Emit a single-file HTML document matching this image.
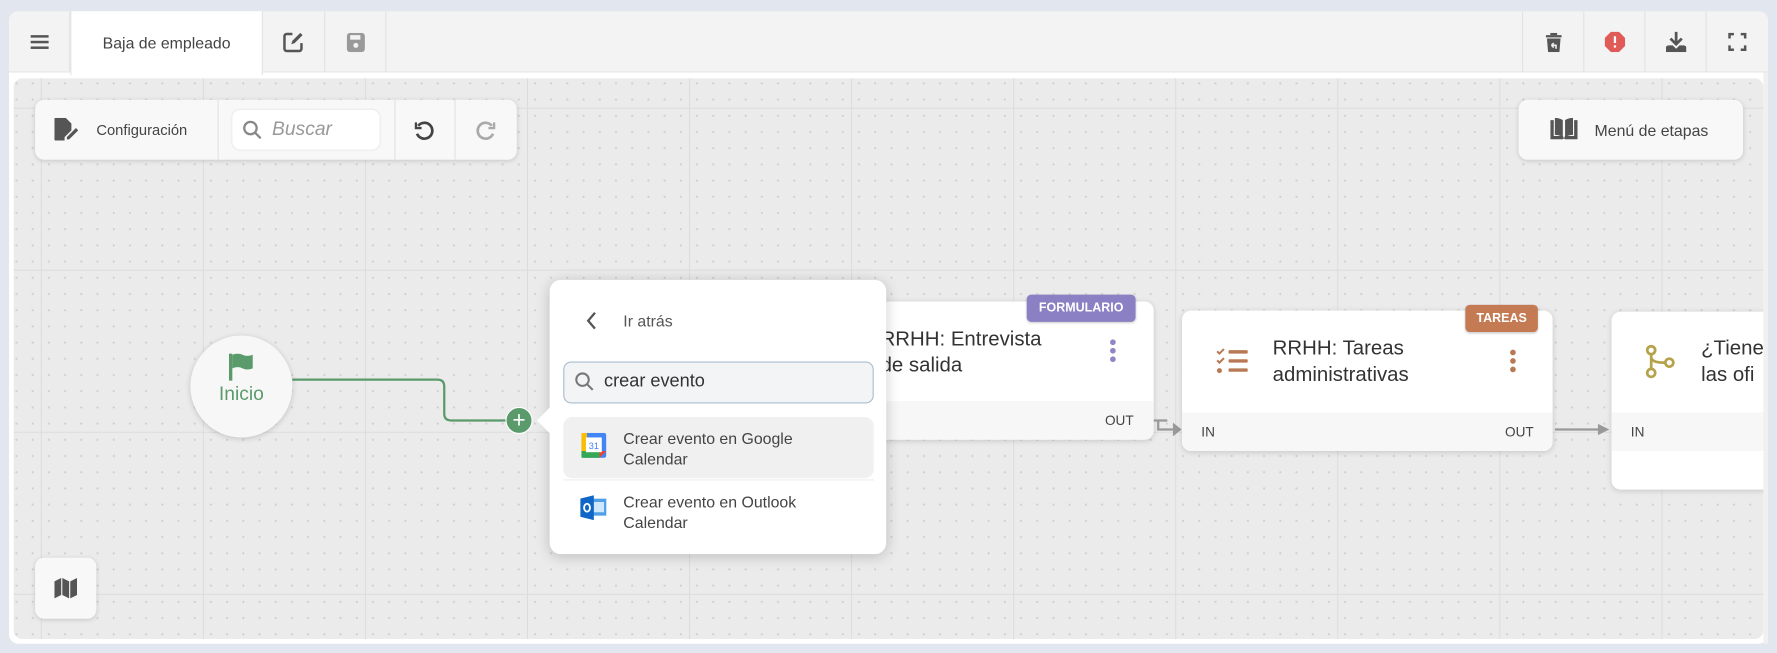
<!DOCTYPE html>
<html><head><meta charset="utf-8"><style>
*{box-sizing:border-box;margin:0;padding:0}
html,body{width:1777px;height:653px;overflow:hidden;background:#e2e6ee;font-family:"Liberation Sans",sans-serif}
#w{position:absolute;left:0;top:0;width:1568px;height:576px;transform:scale(1.13329);transform-origin:0 0}
.abs{position:absolute}
.panel{left:8px;top:10px;width:1552px;height:558px;background:#fff;border-radius:8px}
.hdr{left:8px;top:10px;width:1552px;height:54px;background:#f3f3f3;border-radius:8px 8px 0 0;border-bottom:1px solid #e4e4e4}
.cell{position:absolute;top:10px;height:54px;border-right:1px solid #e2e2e2;display:flex;align-items:center;justify-content:center}
.canvas{left:12px;top:69px;width:1544px;height:495px;border-radius:8px;overflow:hidden;background-color:#ebebeb;
background-image:linear-gradient(#dcdcdc 1px,transparent 1px),linear-gradient(90deg,#dcdcdc 1px,transparent 1px),radial-gradient(circle,#cfcfcf 0.8px,transparent 1.1px);
background-size:143px 143px,143px 143px,14.3px 14.3px;background-position:24px 26px,24px 26px,24px 26px}
.box{background:#f8f8f8;border-radius:8px;box-shadow:0 1px 4px rgba(0,0,0,.15)}
.node{background:#fff;border-radius:8px;box-shadow:0 1px 5px rgba(0,0,0,.15);overflow:visible}
.badge{position:absolute;color:#fff;font-weight:bold;font-size:11px;border-radius:4px;display:flex;align-items:center;justify-content:center;box-shadow:0 1px 2px rgba(0,0,0,.2)}
.t{font-size:18px;color:#333;line-height:23px}
.sm{font-size:13px;color:#444}
</style></head><body><div id="w">
<div class="abs panel"></div>
<div class="abs hdr"></div>
<div class="cell" style="left:8px;width:54px"><svg width="16" height="14"><rect y="1" width="16" height="2.2" fill="#555"/><rect y="6" width="16" height="2.2" fill="#555"/><rect y="11" width="16" height="2.2" fill="#555"/></svg></div>
<div class="cell" style="left:62px;width:170px;background:#fff;height:56px;border-left:1px solid #e2e2e2;font-size:14px;color:#444">Baja de empleado</div>
<div class="cell" style="left:232px;width:55px"><svg width="20" height="20" viewBox="0 0 20 20"><path d="M9 3H4a2 2 0 0 0-2 2v11a2 2 0 0 0 2 2h11a2 2 0 0 0 2-2v-5" fill="none" stroke="#555" stroke-width="2.2"/><path d="M8 12l1-3 7-7 2 2-7 7z" fill="#555"/></svg></div>
<div class="cell" style="left:287px;width:54px"><svg width="16" height="17"><rect width="16" height="17" rx="3" fill="#999"/><rect x="3" y="2" width="9" height="4" fill="#f3f3f3"/><circle cx="8" cy="11" r="2.2" fill="#f3f3f3"/></svg></div>
<div class="cell" style="left:1343px;width:55px;border-left:1px solid #e2e2e2"><svg width="14" height="17"><rect x="0" y="2" width="14" height="2" fill="#555"/><rect x="4" y="0" width="6" height="2" fill="#555"/><path d="M1 5h12l-1 12H2z" fill="#555"/><path d="M5 11h4v3M5 11l2-2M5 11l2 2" stroke="#eee" stroke-width="1.4" fill="none"/></svg></div>
<div class="cell" style="left:1398px;width:54px"><svg width="18" height="18"><path d="M5.5 0h7L18 5.5v7L12.5 18h-7L0 12.5v-7z" fill="#e05a57"/><rect x="8" y="4" width="2" height="6" fill="#fff"/><rect x="8" y="12" width="2" height="2" fill="#fff"/></svg></div>
<div class="cell" style="left:1452px;width:54px"><svg width="18" height="18"><path d="M9 0v10M4 6l5 5 5-5" stroke="#555" stroke-width="2.4" fill="none"/><path d="M0 14q0-2 3-2h3l3 3 3-3h3q3 0 3 2v4H0z" fill="#555"/></svg></div>
<div class="cell" style="left:1506px;width:54px;border-right:none"><svg width="16" height="16" fill="none" stroke="#555" stroke-width="2.4"><path d="M1 5V1h4M11 1h4v4M15 11v4h-4M5 15H1v-4"/></svg></div>

<div class="abs canvas"></div>
<div class="abs box" style="left:31px;top:88px;width:425px;height:53px"></div>
<div class="abs" style="left:192px;top:88px;width:1px;height:53px;background:#e2e2e2"></div>
<div class="abs" style="left:348px;top:88px;width:1px;height:53px;background:#e2e2e2"></div>
<div class="abs" style="left:401px;top:88px;width:1px;height:53px;background:#e2e2e2"></div>
<svg class="abs" style="left:48px;top:104px" width="22" height="20"><path d="M0 1a1 1 0 0 1 1-1h9l5 5v6l-6 6v3H1a1 1 0 0 1-1-1z" fill="#555"/><path d="M11 17l8-8 2 2-8 8h-2z" fill="#555"/></svg>
<div class="abs sm" style="left:85px;top:107px">Configuración</div>
<div class="abs" style="left:205px;top:97px;width:130px;height:35px;background:#fff;border-radius:7px;box-shadow:0 0 2px rgba(0,0,0,.1)"></div>
<svg class="abs" style="left:214px;top:106px" width="17" height="17" fill="none" stroke="#888" stroke-width="2"><circle cx="7" cy="7" r="5.5"/><path d="M11 11l5 5"/></svg>
<div class="abs" style="left:240px;top:104px;font-size:17px;color:#999;font-style:italic">Buscar</div>
<svg class="abs" style="left:365px;top:106px" width="18" height="18" fill="none" stroke="#444" stroke-width="2.4"><path d="M4 5a7 7 0 1 1-1 7"/><path d="M2 2v5h5" stroke-width="2"/></svg>
<svg class="abs" style="left:420px;top:106px" width="18" height="18" fill="none" stroke="#aaa" stroke-width="2.4"><path d="M14 5a7 7 0 1 0 1 7"/><path d="M16 2v5h-5" stroke-width="2"/></svg>

<div class="abs box" style="left:1340px;top:88px;width:198px;height:53px"></div>
<svg class="abs" style="left:1368px;top:104px" width="24" height="19"><path d="M0 2h3v14h8l1 2-1 1H0zM24 2h-3v14h-8l-1 2 1 1h11z" fill="#555"/><path d="M4 0q4 0 7 2v15q-3-2-7-2zM20 0q-4 0-7 2v15q3-2 7-2z" fill="#555"/></svg>
<div class="abs sm" style="left:1407px;top:107px;font-size:14px">Menú de etapas</div>

<div class="abs box" style="left:31px;top:492px;width:54px;height:54px"></div>
<svg class="abs" style="left:48px;top:510px" width="20" height="18"><path d="M0 3l6-3v15l-6 3zM7 0l6 3v15l-6-3zM14 3l6-3v15l-6 3z" fill="#555"/></svg>

<!-- Inicio -->
<svg class="abs" style="left:250px;top:330px" width="220" height="50" fill="none" stroke="#5b9a6b" stroke-width="2"><path d="M8 5h128q6 0 6 6v24q0 6 6 6h60"/></svg>
<div class="abs" style="left:168px;top:296px;width:90px;height:90px;border-radius:50%;background:#f7f7f7;box-shadow:0 1px 5px rgba(0,0,0,.18)"></div>
<svg class="abs" style="left:202px;top:312px" width="22" height="24"><rect x="0" y="0" width="3" height="24" fill="#5b9a6b"/><path d="M3 1q5-2 9 0t9 0v12q-5 2-9 0t-9 0z" fill="#5b9a6b"/></svg>
<div class="abs" style="left:168px;top:338px;width:90px;text-align:center;font-size:17px;color:#5b9a6b">Inicio</div>
<div class="abs" style="left:446px;top:359px;width:24px;height:24px;border-radius:50%;background:#5b9a6b;border:1.5px solid #fff"></div>
<div class="abs" style="left:446px;top:358px;width:24px;text-align:center;color:#fff;font-size:20px;line-height:26px">+</div>

<!-- Node 1 -->
<div class="abs node" style="left:690px;top:266px;width:328px;height:122px;overflow:hidden"><div style="position:absolute;left:0;right:0;bottom:0;height:34px;background:#f7f7f7"></div></div>
<div class="abs t" style="left:777px;top:288px">RRHH: Entrevista<br>de salida</div>
<svg class="abs" style="left:979px;top:299px" width="6" height="22" fill="#8f86c6"><circle cx="3" cy="3" r="2.5"/><circle cx="3" cy="10.5" r="2.5"/><circle cx="3" cy="18" r="2.5"/></svg>
<div class="abs sm" style="left:975px;top:364px;font-size:12px">OUT</div>
<div class="badge" style="left:906px;top:260px;width:96px;height:24px;background:#8a80c3">FORMULARIO</div>
<svg class="abs" style="left:1018px;top:365px" width="26" height="20" fill="none" stroke="#999" stroke-width="2"><path d="M0 6h12M4 6v8h18"/><path d="M18 10l5 4-5 4z" fill="#999"/></svg>

<!-- Node 2 -->
<div class="abs node" style="left:1043px;top:274px;width:327px;height:124px;overflow:hidden"><div style="position:absolute;left:0;right:0;bottom:0;height:34px;background:#f7f7f7"></div></div>
<div class="badge" style="left:1293px;top:269px;width:64px;height:24px;background:#c47a52">TAREAS</div>
<svg class="abs" style="left:1073px;top:307px" width="30" height="24" fill="#b87a55"><path d="M1 3l2 2 4-4" stroke="#b87a55" stroke-width="1.8" fill="none"/><path d="M1 11l2 2 4-4" stroke="#b87a55" stroke-width="1.8" fill="none"/><circle cx="3" cy="20" r="2.2"/><rect x="11" y="2" width="17" height="3" rx="1"/><rect x="11" y="10" width="17" height="3" rx="1"/><rect x="11" y="18" width="17" height="3" rx="1"/></svg>
<div class="abs t" style="left:1123px;top:296px">RRHH: Tareas<br>administrativas</div>
<svg class="abs" style="left:1332px;top:308px" width="6" height="22" fill="#b87a55"><circle cx="3" cy="3" r="2.5"/><circle cx="3" cy="10.5" r="2.5"/><circle cx="3" cy="18" r="2.5"/></svg>
<div class="abs sm" style="left:1060px;top:374px;font-size:12px">IN</div>
<div class="abs sm" style="left:1328px;top:374px;font-size:12px">OUT</div>
<svg class="abs" style="left:1372px;top:373px" width="50" height="12"><path d="M0 6h40" stroke="#999" stroke-width="2"/><path d="M38 1l10 5-10 5z" fill="#999"/></svg>

<!-- Node 3 -->
<div class="abs node" style="left:1422px;top:275px;width:160px;height:157px;overflow:hidden"><div style="position:absolute;left:0;right:0;top:89px;height:34px;background:#f7f7f7"></div></div>
<svg class="abs" style="left:1452px;top:304px" width="26" height="30" fill="none" stroke="#b5a24a" stroke-width="2.4"><circle cx="5" cy="5" r="3.5"/><circle cx="5" cy="25" r="3.5"/><circle cx="21" cy="16" r="3.5"/><path d="M5 9v12M5 11q0 5 12 5"/></svg>
<div class="abs t" style="left:1501px;top:296px">¿Tiene<br>las ofi</div>
<div class="abs sm" style="left:1439px;top:374px;font-size:12px">IN</div>
<div class="abs" style="left:1556px;top:64px;width:12px;height:504px;background:#f0f0f0"></div>
<div class="abs" style="left:1560px;top:0;width:8px;height:576px;background:#e2e6ee"></div>

<!-- Popup -->
<div class="abs" style="left:485px;top:247px;width:297px;height:242px;background:#fff;border-radius:10px;box-shadow:0 2px 12px rgba(0,0,0,.2)"></div>
<div class="abs" style="left:477px;top:363px;width:16px;height:16px;background:#fff;transform:rotate(45deg)"></div>
<svg class="abs" style="left:517px;top:275px" width="10" height="16" fill="none" stroke="#555" stroke-width="2"><path d="M8 1L2 8l6 7"/></svg>
<div class="abs" style="left:550px;top:275px;font-size:14px;color:#555">Ir atrás</div>
<div class="abs" style="left:497px;top:319px;width:274px;height:37px;background:#f3f4f6;border:1px solid #a9bccf;border-radius:7px"></div>
<svg class="abs" style="left:507px;top:328px" width="18" height="18" fill="none" stroke="#777" stroke-width="1.8"><circle cx="7" cy="7" r="5.5"/><path d="M11 11l5 5"/></svg>
<div class="abs" style="left:533px;top:328px;font-size:16px;color:#333">crear evento</div>
<div class="abs" style="left:497px;top:368px;width:274px;height:54px;background:#f0f0f0;border-radius:8px"></div>
<div class="abs" style="left:497px;top:423px;width:274px;height:1px;background:#eee"></div>
<svg class="abs" style="left:513px;top:382px" width="22" height="22"><rect width="22" height="22" rx="2" fill="#4285f4"/><rect x="0" y="16" width="16" height="6" fill="#34a853"/><rect x="0" y="0" width="5" height="16" fill="#fbbc04"/><path d="M16 16h6l-6 6z" fill="#ea4335"/><rect x="4" y="4" width="14" height="13" fill="#fff"/><text x="11" y="14" font-size="8" text-anchor="middle" fill="#4285f4" font-family="Liberation Sans">31</text></svg>
<div class="abs" style="left:550px;top:378px;font-size:14px;color:#444;line-height:18px">Crear evento en Google<br>Calendar</div>
<svg class="abs" style="left:512px;top:437px" width="24" height="22"><rect x="8" y="3" width="15" height="15" fill="#50a0e8"/><path d="M10 6h11v9H10z" fill="#cfe6fb"/><path d="M0 3l12-3v22L0 19z" fill="#1066c7"/><ellipse cx="6" cy="11" rx="2.6" ry="3.5" fill="none" stroke="#fff" stroke-width="1.6"/></svg>
<div class="abs" style="left:550px;top:434px;font-size:14px;color:#444;line-height:18px">Crear evento en Outlook<br>Calendar</div>
</div></body></html>
